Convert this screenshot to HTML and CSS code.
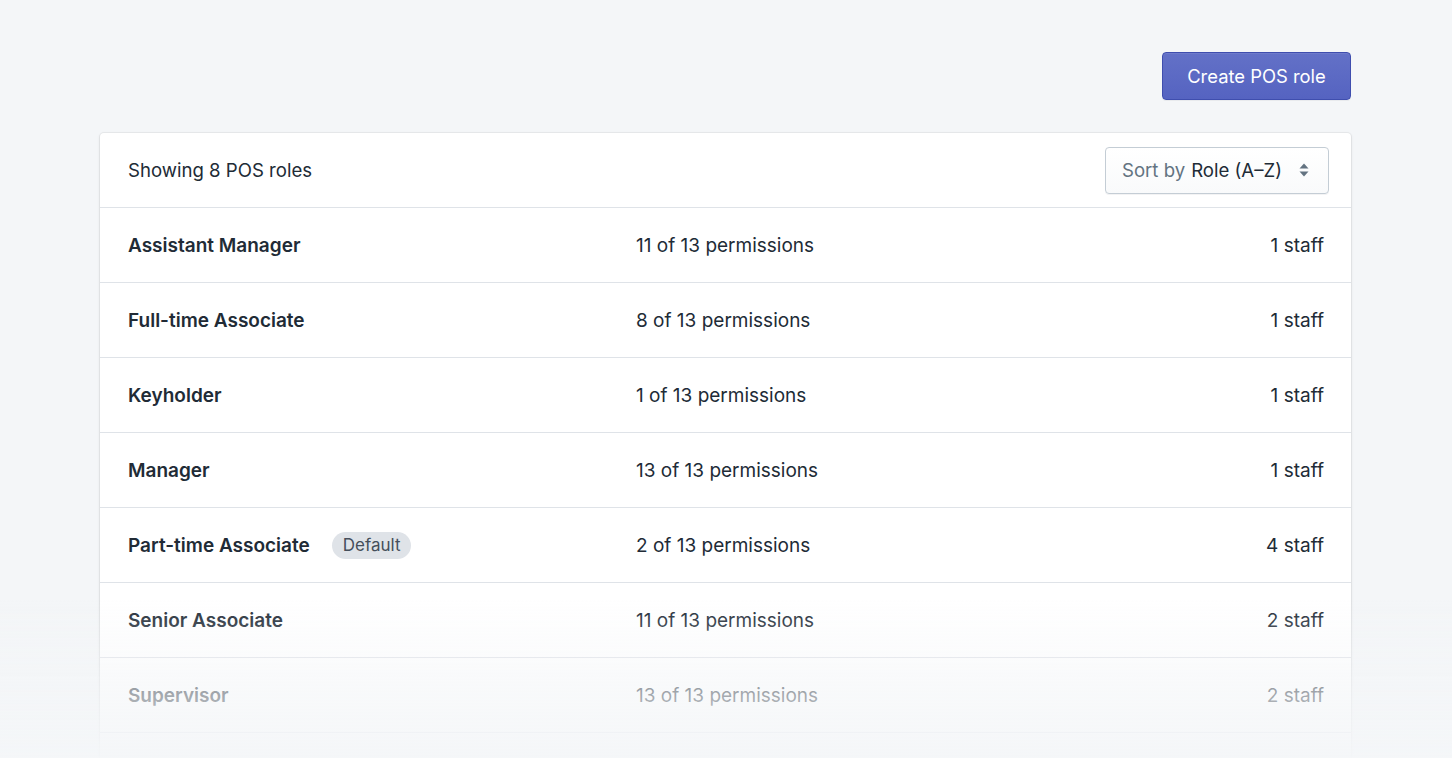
FILE: index.html
```html
<!DOCTYPE html>
<html lang="en">
<head>
<meta charset="utf-8">
<title>POS roles</title>
<link rel="stylesheet" href="styles.css">
</head>
<body>
<main class="page">
  <div class="page-actions">
    <button class="btn-primary" type="button">Create POS role</button>
  </div>

  <section class="card">
    <header class="card-header">
      <span class="count">Showing 8 POS roles</span>
      <label class="sort">
        <span class="sort-label">Sort by</span>
        <span class="sort-value">Role (A–Z)</span>
        <svg class="sort-icon" width="12" height="18" viewBox="0 0 12 18" aria-hidden="true">
          <path d="M6 2.5 L10.5 7.5 H1.5 Z"/>
          <path d="M6 15.5 L10.5 10.5 H1.5 Z"/>
        </svg>
      </label>
    </header>

    <ul class="roles">
      <li class="role">
        <span class="role-name">Assistant Manager</span>
        <span class="role-perms">11 of 13 permissions</span>
        <span class="role-staff">1 staff</span>
      </li>
      <li class="role">
        <span class="role-name">Full-time Associate</span>
        <span class="role-perms">8 of 13 permissions</span>
        <span class="role-staff">1 staff</span>
      </li>
      <li class="role">
        <span class="role-name">Keyholder</span>
        <span class="role-perms">1 of 13 permissions</span>
        <span class="role-staff">1 staff</span>
      </li>
      <li class="role">
        <span class="role-name">Manager</span>
        <span class="role-perms">13 of 13 permissions</span>
        <span class="role-staff">1 staff</span>
      </li>
      <li class="role">
        <span class="role-name">Part-time Associate <span class="badge">Default</span></span>
        <span class="role-perms">2 of 13 permissions</span>
        <span class="role-staff">4 staff</span>
      </li>
      <li class="role">
        <span class="role-name">Senior Associate</span>
        <span class="role-perms">11 of 13 permissions</span>
        <span class="role-staff">2 staff</span>
      </li>
      <li class="role">
        <span class="role-name">Supervisor</span>
        <span class="role-perms">13 of 13 permissions</span>
        <span class="role-staff">2 staff</span>
      </li>
    </ul>
  </section>
</main>
</body>
</html>
```

FILE: styles.css
```css
* {
  box-sizing: border-box;
}

html,
body {
  margin: 0;
  height: 100%;
  overflow: hidden;
}

body {
  padding: 0 101px 0 100px;
  background: #f4f6f8;
  font-family: Inter, "Noto Sans", "Liberation Sans", sans-serif;
  color: #212b36;
  -webkit-font-smoothing: antialiased;
}

.page {
  padding-top: 52px;
}

/* list fades into the background toward the bottom edge */
.page::after {
  content: "";
  position: fixed;
  left: 0;
  right: 0;
  top: 600px;
  bottom: 0;
  background: linear-gradient(to bottom, rgba(244, 246, 248, 0) 0%, rgba(244, 246, 248, 0.62) 60%, rgba(244, 246, 248, 0.95) 100%);
  pointer-events: none;
}

.page-actions {
  display: flex;
  justify-content: flex-end;
  margin-bottom: 33px;
}

.btn-primary {
  height: 48px;
  width: 189px;
  padding: 0 20px;
  border: 1px solid #3f4eae;
  border-radius: 4px;
  background: linear-gradient(to bottom, #6371c7, #5563c1);
  box-shadow: inset 0 1px 0 0 #6f7bcb, 0 1px 0 0 rgba(22, 29, 37, 0.05);
  color: #fff;
  font-family: inherit;
  font-size: 18.4px;
  font-weight: 400;
  cursor: pointer;
}

.card {
  padding-bottom: 60px;
  background: #fff;
  border-radius: 4px;
  box-shadow: 0 0 0 1px rgba(63, 63, 68, 0.06), 0 1px 3px 0 rgba(63, 63, 68, 0.15);
}

.card-header {
  display: flex;
  align-items: center;
  justify-content: space-between;
  height: 75px;
  padding: 0 22px 0 28px;
  border-bottom: 1px solid #dfe3e8;
}

.count {
  font-size: 18.6px;
}

.sort {
  display: flex;
  align-items: center;
  width: 224px;
  height: 47px;
  padding: 0 18px 0 16px;
  border: 1px solid #c4cdd5;
  border-radius: 4px;
  box-shadow: 0 1px 0 0 rgba(22, 29, 37, 0.05);
  background: linear-gradient(to bottom, #fff, #f9fafb);
  font-size: 18.6px;
}

.sort-label {
  color: #637381;
  margin-right: 6px;
}

.sort-value {
  color: #212b36;
}

.sort-icon {
  margin-left: auto;
  fill: #637381;
}

.roles {
  list-style: none;
  margin: 0;
  padding: 0;
}

.role {
  display: grid;
  grid-template-columns: 508px 1fr auto;
  align-items: center;
  height: 75px;
  padding: 0 27px 0 28px;
  border-bottom: 1px solid #dfe3e8;
  font-size: 19px;
}

.role-name {
  display: flex;
  align-items: center;
  font-weight: 600;
}

.role-staff {
  text-align: right;
}

.badge {
  display: inline-flex;
  align-items: center;
  height: 27px;
  margin-left: 22px;
  padding: 0 11px;
  border-radius: 14px;
  background: #dfe3e8;
  color: #454f5b;
  font-size: 17px;
  font-weight: 400;
}
```
